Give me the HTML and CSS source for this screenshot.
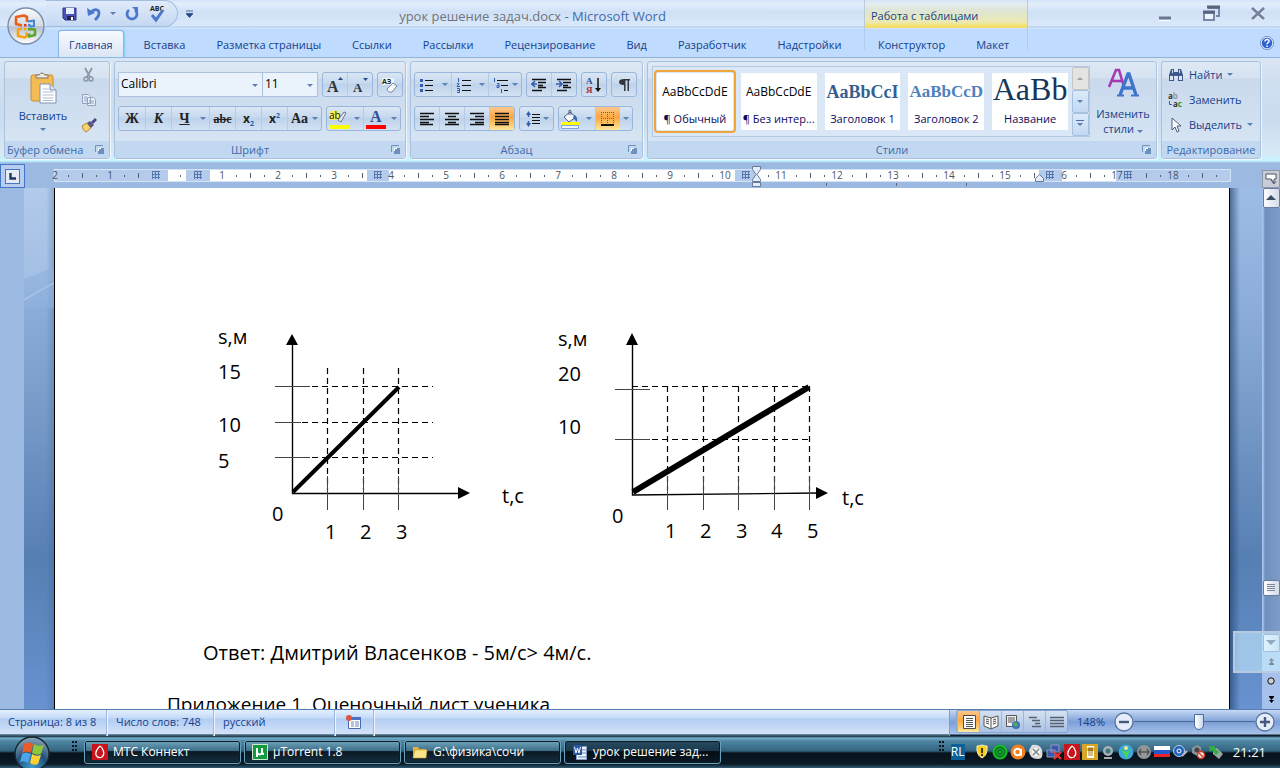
FILE: index.html
```html
<!DOCTYPE html>
<html lang="ru">
<head>
<meta charset="utf-8">
<title>урок решение задач.docx - Microsoft Word</title>
<link rel="stylesheet" href="styles.css">
</head>
<body>
<header class="header">
  <button class="office" aria-label="Кнопка Office">
    <svg width="40" height="40" viewBox="0 0 40 40">
      <defs>
        <linearGradient id="orb" x1="0" y1="0" x2="0" y2="1"><stop offset="0" stop-color="#fafcfe"/><stop offset=".5" stop-color="#d3d8e2"/><stop offset=".52" stop-color="#b7bfcf"/><stop offset="1" stop-color="#fff"/></linearGradient>
      </defs>
      <circle cx="20" cy="20" r="18" fill="url(#orb)" stroke="#7c8da8" stroke-width="1.4"/>
      <g fill="none" stroke-width="2.6" stroke-linejoin="round">
        <path d="M16 19.500l-6-1.500v-7l8-1.500 3 1.500v5" stroke="#e8601c"/>
        <path d="M22 15.500l6-1v5.500l-4 .5" stroke="#3d86d8" stroke-width="2"/>
        <path d="M16 22.500l-4 1v6.500l7 1.500 1.500-1v-4" stroke="#f5a512"/>
        <path d="M23 23l6 .5v5.500l-6 1.500v-3" stroke="#5aa52c"/>
      </g>
      <path d="M18 18h2.500v2.500H18z" fill="#e03a1a"/><path d="M22 18h2.500v2.500H22z" fill="#3d86d8"/><path d="M18 22h2.500v2.500H18z" fill="#f5a512"/><path d="M22 22h2.500v2.500H22z" fill="#5aa52c"/>
    </svg>
  </button>
  <div class="titlebar">
    <div class="qat">
      <button aria-label="Сохранить"><svg width="16" height="16"><path d="M1 2h13v12H3l-2-2z" fill="#4a50b4" stroke="#30348c"/><path d="M4 2h8v6H4z" fill="#e6effc"/><path d="M5 10h7v4H5z" fill="#20264e"/><path d="M9 11h2v3H9z" fill="#fff"/></svg></button>
      <button aria-label="Отменить"><svg width="16" height="16"><path d="M5 6c4-4 8-2 8 1 0 3-1 4-4 7" fill="none" stroke="#4a78cc" stroke-width="2.800"/><path d="M1 2l1 8 7-3z" fill="#4a78cc"/></svg></button>
      <i class="arrow"></i>
      <button aria-label="Повторить"><svg width="16" height="16"><path d="M5 4a5 5 0 1 0 6 0" fill="none" stroke="#4a78cc" stroke-width="2.800"/><path d="M8 1h6v6z" fill="#4a78cc"/></svg></button>
      <button aria-label="Правописание"><svg width="20" height="18"><text x="2" y="6" class="tiny">ABC</text><path d="M4 10l4 5 7-10" fill="none" stroke="#4a78cc" stroke-width="3"/></svg></button>
    </div>
    <button class="customize" aria-label="Настройка панели быстрого доступа"><svg width="7" height="8"><path d="M0 1h7M0 3.500h7l-3.500 4z" fill="#274a86" stroke="#274a86" stroke-width=".8"/></svg></button>
    <h1 class="title"><span>урок решение задач.docx</span> - Microsoft Word</h1>
  </div>
  <div class="context-title">Работа с таблицами</div>
  <div class="window-buttons">
    <button aria-label="Свернуть"><svg width="14" height="14"><path d="M1 11h12" stroke="#6a7890" stroke-width="3"/><path d="M1 13.500h12" stroke="#fff"/></svg></button>
    <button aria-label="Восстановить"><svg width="18" height="18"><path d="M6 3h11v8h-3" fill="none" stroke="#7788a6" stroke-width="2"/><path d="M5 2h13" stroke="#56647e" stroke-width="3"/><path d="M2 8h10v7H2z" fill="#edf4fd" stroke="#7788a6" stroke-width="2"/><path d="M1 7h12" stroke="#56647e" stroke-width="3"/></svg></button>
    <button aria-label="Закрыть"><svg width="16" height="14"><path d="M2 1l12 11M14 1L2 12" stroke="#fff" stroke-width="4"/><path d="M2 1l12 11M14 1L2 12" stroke="#74839f" stroke-width="3"/></svg></button>
  </div>
  <nav class="tabs">
    <a href="#" class="active">Главная</a><a href="#">Вставка</a><a href="#">Разметка страницы</a><a href="#">Ссылки</a><a href="#">Рассылки</a><a href="#">Рецензирование</a><a href="#">Вид</a><a href="#">Разработчик</a><a href="#">Надстройки</a>
  </nav>
  <nav class="tabs context"><a href="#">Конструктор</a><a href="#">Макет</a></nav>
  <div class="help">
    <button aria-label="Справка"><svg width="14" height="14"><circle cx="7" cy="7" r="6" fill="#2f62d0" stroke="#dce9fb" stroke-width="1.500"/><circle cx="7" cy="7" r="6.600" fill="none" stroke="#5677b0" stroke-width=".7"/><path d="M5 5.500c0-3 4.500-2.500 4 0-.3 1-2 1.200-2 2.800M7 9.500v1.500" fill="none" stroke="#fff" stroke-width="1.500"/></svg></button>
  </div>
</header>

<main class="ribbon">
  <section class="group clipboard">
    <div class="body">
      <button class="paste"><svg width="30" height="32"><rect x="3" y="3" width="22" height="26" rx="2" fill="#f4bd53" stroke="#c58d33"/><path d="M8 6V3h3q3-4 6 0h3v3z" fill="#ece6dc" stroke="#7c7468"/><path d="M12 12h10l6 6v13H12z" fill="#fff" stroke="#7d90b4"/><path d="M22 12v6h6" fill="#d6e2f4" stroke="#7d90b4"/><path d="M14.500 17h6M14.500 20h11M14.500 23h11M14.500 26h11M14.500 28.500h11" stroke="#b0bdd4"/></svg><span>Вставить</span><i class="arrow"></i></button>
      <div class="small-tools">
        <button aria-label="Вырезать"><svg width="16" height="16"><path d="M4 1l5 9M11 1L6 10" stroke="#8c97aa" stroke-width="1.800"/><circle cx="5" cy="12" r="2" fill="none" stroke="#8c97aa" stroke-width="1.500"/><circle cx="10" cy="12" r="2" fill="none" stroke="#8c97aa" stroke-width="1.500"/></svg></button>
        <button aria-label="Копировать"><svg width="16" height="16"><path d="M1.500 2.500h6l2 2v7h-8zM6.500 5.500h6l2 2v6h-8z" fill="#e9eff8" stroke="#92a2be"/><path d="M3 5h3M3 7h3M3 9h3M8 9h5M8 11h5" stroke="#92a2be"/></svg></button>
        <button aria-label="Формат по образцу"><svg width="16" height="16"><path d="M1 9l5-3 4 5-5 4q-3-1-4-6z" fill="#f6d36c" stroke="#b88a38"/><path d="M6 6l3-2 4 4-3 3z" fill="#5d5684"/><path d="M10 5l4-4 2 2-4 4z" fill="#49468c"/></svg></button>
      </div>
    </div>
    <h2>Буфер обмена <button class="launch" aria-label="Буфер обмена: параметры"><svg width="9" height="9"><use href="#launch"/></svg></button></h2>
  </section>

  <section class="group font">
    <div class="body rows">
      <div class="row">
        <div class="combos">
          <label class="combo family"><select aria-label="Шрифт"><option>Calibri</option></select></label>
          <label class="combo size"><select aria-label="Размер"><option>11</option></select></label>
        </div>
        <div class="btns"><button aria-label="Увеличить"><svg width="18" height="18"><text x="1" y="16" class="serif big">A</text><path d="M12 4l2.500-3L17 4z" fill="#274a86"/></svg></button><button aria-label="Уменьшить"><svg width="18" height="18"><text x="2" y="16" class="serif">A</text><path d="M12 2h5l-2.500 3z" fill="#274a86"/></svg></button></div>
        <div class="btns"><button aria-label="Очистить формат"><svg width="20" height="18"><path d="M2 2h12v7H2z" fill="#eef3fa"/><text x="2" y="8" class="tiny">AЗ</text><path d="M7 13l6-6 4 3-5 6q-4 1-5-3z" fill="#f4f7fc" stroke="#7484a2"/></svg></button></div>
      </div>
      <div class="row">
        <div class="btns format">
          <button class="glyph"><b>Ж</b></button><button class="glyph"><b><em>К</em></b></button><button class="glyph"><b><u>Ч</u></b></button><button class="drop" aria-label="Подчеркивание"><i class="arrow"></i></button><button class="glyph small"><s>abc</s></button><button class="glyph script"><b>x<sub>2</sub></b></button><button class="glyph script"><b>x<sup>2</sup></b></button><button class="glyph case"><b>Aa</b><i class="arrow"></i></button>
        </div>
        <div class="btns">
          <button aria-label="Выделение"><svg width="20" height="20"><path d="M0 2h11v9H0z" fill="#f5ee5a"/><text x="0" y="10" class="ab">ab</text><path d="M9 11l6-8 2 1-5 9z" fill="#e5ebf5" stroke="#66748e"/><path d="M0 16h20v4H0z" fill="#ff0"/></svg></button><button class="drop" aria-label="Цвет выделения"><i class="arrow"></i></button><button aria-label="Цвет текста"><svg width="20" height="20"><text x="4" y="13" class="serif colour">A</text><path d="M0 16h20v4H0z" fill="#f00"/></svg></button><button class="drop" aria-label="Выбор цвета"><i class="arrow"></i></button>
        </div>
      </div>
    </div>
    <h2>Шрифт <button class="launch" aria-label="Шрифт: параметры"><svg width="9" height="9"><use href="#launch"/></svg></button></h2>
  </section>

  <section class="group paragraph">
    <div class="body rows">
      <div class="row">
        <div class="btns">
          <button aria-label="Маркеры"><svg width="16" height="16"><path d="M6 3.500h8M6 8.500h8M6 13.500h8" stroke="#111"/><path d="M1 2h3v3H1zM1 7h3v3H1zM1 12h3v3H1z" fill="#355cae"/></svg></button><button class="drop" aria-label="Вид маркеров"><i class="arrow"></i></button><button aria-label="Нумерация"><svg width="16" height="16"><path d="M6 3.500h9M6 8.500h9M6 13.500h9" stroke="#111"/><path d="M2.500 1v4M1 6.500h2L1 9.500h3M1 11.500h2.500v4H1M1 13.500h2" fill="none" stroke="#355cae"/></svg></button><button class="drop" aria-label="Вид нумерации"><i class="arrow"></i></button><button class="wide" aria-label="Многоуровневый список"><svg width="18" height="16"><path d="M5 3.500h11M9 8.500h7M12 13.500h4" stroke="#111"/><path d="M2.500 1v4M5 6.500h2v4H5V8.500h2M9.500 12v4" fill="none" stroke="#355cae"/></svg><i class="arrow"></i></button>
        </div>
        <div class="btns"><button aria-label="Уменьшить отступ"><svg width="16" height="16"><path d="M1 2.500h14M7 5.500h8M7 8.500h5M7 10.500h8M1 13.500h10" stroke="#111" stroke-width="1.500"/><path d="M6 7H1M4 4L1 7l3 3" fill="none" stroke="#355cae" stroke-width="1.600"/></svg></button><button aria-label="Увеличить отступ"><svg width="16" height="16"><path d="M1 2.500h14M7 5.500h8M7 8.500h5M7 10.500h8M1 13.500h10" stroke="#111" stroke-width="1.500"/><path d="M0 7h5M3 4l3 3-3 3" fill="none" stroke="#355cae" stroke-width="1.600"/></svg></button></div>
        <div class="btns"><button aria-label="Сортировка"><svg width="18" height="18"><text x="1" y="8" class="sort">А</text><text x="1" y="17" class="sort red">Я</text><path d="M13 2v13" stroke="#111" stroke-width="1.500"/><path d="M10 12h6l-3 4z" fill="#111"/></svg></button></div>
        <div class="btns"><button aria-label="Отобразить все знаки"><svg width="14" height="16"><path d="M7 2h6v1.500h-1V14h-1.500V3.500H8.500V14H7V8Q2 8 2 5t5-3z" fill="#33383f"/></svg></button></div>
      </div>
      <div class="row">
        <div class="btns">
          <button aria-label="По левому краю"><svg width="16" height="14"><path d="M1 1.500h14M1 4.500h9M1 7.500h14M1 10.500h9M1 12.500h13" stroke="#111" stroke-width="1.400"/></svg></button><button aria-label="По центру"><svg width="16" height="14"><path d="M1 1.500h14M4 4.500h8M1 7.500h14M4 10.500h8M1 12.500h14" stroke="#111" stroke-width="1.400"/></svg></button><button aria-label="По правому краю"><svg width="16" height="14"><path d="M1 1.500h14M6 4.500h9M1 7.500h14M6 10.500h9M1 12.500h14" stroke="#111" stroke-width="1.400"/></svg></button><button class="on" aria-label="По ширине"><svg width="16" height="14"><path d="M1 1.500h14M1 4.500h14M1 7.500h14M1 10.500h14M1 12.500h14" stroke="#111" stroke-width="1.400"/></svg></button>
        </div>
        <div class="btns"><button class="wide" aria-label="Междустрочный интервал"><svg width="16" height="16"><path d="M7 3.500h8M7 6.500h8M7 9.500h8M7 12.500h8" stroke="#111"/><path d="M3.500 2v4M3.500 10v4" stroke="#355cae" stroke-width="1.500"/><path d="M1 4l2.500-4L6 4zM1 12l2.500 4L6 12z" fill="#355cae"/></svg><i class="arrow"></i></button></div>
        <div class="btns">
          <button aria-label="Заливка"><svg width="20" height="20"><path d="M3 8l6-5 6 5-7 5z" fill="#f5f8fd" stroke="#4f5f7c"/><path d="M8 6V1.500q2-1 2 1V6" fill="none" stroke="#4f5f7c"/><path d="M13 6q4 1 3 7-2-2-4-4z" fill="#3e68b6"/><path d="M0 13h18v3H0z" fill="#ff0"/><path d="M.5 16.500h17v3H.5z" fill="#eef5ff" stroke="#7aa6dc"/></svg></button><button class="drop" aria-label="Цвет заливки"><i class="arrow"></i></button><button class="on" aria-label="Границы"><svg width="16" height="16"><path d="M1.500 1v12M7.500 1v12M13.500 1v12M1 1.500h13M1 7.500h13" stroke="#735f48" stroke-dasharray="1 1"/><path d="M1 14h13" stroke="#111" stroke-width="2"/></svg></button><button class="drop" aria-label="Вид границ"><i class="arrow"></i></button>
        </div>
      </div>
    </div>
    <h2>Абзац <button class="launch" aria-label="Абзац: параметры"><svg width="9" height="9"><use href="#launch"/></svg></button></h2>
  </section>

  <section class="group styles">
    <div class="body">
      <div class="gallery">
        <button class="style picked"><span class="sample">AaBbCcDdE</span><span>¶ Обычный</span></button>
        <button class="style"><span class="sample">AaBbCcDdE</span><span>¶ Без интер...</span></button>
        <button class="style"><span class="sample h1">AaBbCcI</span><span>Заголовок 1</span></button>
        <button class="style"><span class="sample h2">AaBbCcD</span><span>Заголовок 2</span></button>
        <button class="style"><span class="sample name">AaBb</span><span>Название</span></button>
        <div class="scroller"><button class="off" aria-label="Вверх"><i class="arrow up"></i></button><button aria-label="Вниз"><i class="arrow"></i></button><button aria-label="Еще"><i class="arrow more"></i></button></div>
      </div>
      <button class="change"><svg width="32" height="32"><path d="M2 21L9 4h3l5 17M4 15h11" fill="none" stroke="#a33ab0" stroke-width="2.600"/><path d="M13 29l8-21h1l7 21M16 22h10" fill="none" stroke="#3f74cc" stroke-width="3.400"/><path d="M10 29.500h7M24 29.500h8" stroke="#3f74cc" stroke-width="2"/></svg><span>Изменить<br>стили <i class="arrow"></i></span></button>
    </div>
    <h2>Стили <button class="launch" aria-label="Стили: параметры"><svg width="9" height="9"><use href="#launch"/></svg></button></h2>
  </section>

  <section class="group editing">
    <div class="body">
      <button><svg width="16" height="16"><path d="M3 2h3v3h4V2h3l2 6v6h-5V9H6v5H1V8z" fill="#3d598a"/><path d="M2 9h3v4H2zM11 9h3v4h-3zM4 3h1v3H4zM11 3h1v3h-1z" fill="#dbe7f8"/></svg>Найти <i class="arrow"></i></button>
      <button><svg width="16" height="16"><text x="0" y="7" class="repl">a<tspan fill="#999">b</tspan></text><text x="5" y="15" class="repl">a<tspan fill="#159a2c">c</tspan></text><path d="M1.500 9v3.500H4" fill="none" stroke="#355cae"/></svg>Заменить</button>
      <button><svg width="16" height="16"><path d="M4 1v12l3-3 2 5 2-1-2-5h4z" fill="#fff" stroke="#4c5c78"/></svg>Выделить <i class="arrow"></i></button>
    </div>
    <h2>Редактирование</h2>
  </section>
</main>

<div class="rulerbar">
  <button class="tabstop" aria-label="Позиция табуляции"><span><svg width="8" height="8"><path d="M1.500 1v5.500H7" fill="none" stroke="#22365c" stroke-width="2.400"/></svg></span></button>
  <svg class="ruler" height="24">
    <defs>
      <pattern id="ticks" x="54" y="169" width="56" height="13" patternUnits="userSpaceOnUse"><path d="M14 6h1v2h-1zM28 4h1v5h-1zM42 6h1v2h-1z" fill="#55606e"/></pattern>
      <path id="cell" d="M0 .5h8M0 3.500h8M0 6.500h8M.5 0v8M3.500 0v8M6.500 0v8" stroke="#5577ad" fill="none"/>
      <g id="launch"><path d="M.5 7V.5H8" fill="none" stroke="#7391bd"/><path d="M3 3h6v6H3z" fill="#6f8fbd"/><path d="M3 3h3v1H4v2H3z" fill="#fff"/></g>
    </defs>
    <g transform="translate(-25 -164)">
      <path d="M54 169h1177v13H54z" fill="#b4cbeb"/>
      <path d="M168 169h18v13h-18zM210 169h157v13H210zM389 169h346v13H389zM757 169h282v13H757zM1062 169h54v13h-54z" fill="#fff"/>
      <path d="M54 169.500h1176.500v12H54.500z" fill="none" stroke="#d5e3f6"/>
      <path d="M60 169h88v13H60zM168 169h18v13h-18zM226 169h141v13H226zM395 169h340v13H395zM762 169h276v13H762zM1068 169h42v13h-42zM1134 169h90v13h-90z" fill="url(#ticks)"/>
      <g class="num"><text x="55" y="179">2</text><text x="110" y="179">1</text><text x="222" y="179">1</text><text x="278" y="179">2</text><text x="334" y="179">3</text><text x="391" y="179">4</text><text x="446" y="179">5</text><text x="502" y="179">6</text><text x="558" y="179">7</text><text x="614" y="179">8</text><text x="670" y="179">9</text><text x="725" y="179">10</text><text x="781" y="179">11</text><text x="837" y="179">12</text><text x="893" y="179">13</text><text x="949" y="179">14</text><text x="1005" y="179">15</text><text x="1064" y="179">6</text><text x="1117" y="179">17</text><text x="1173" y="179">18</text></g>
      <use href="#cell" x="152" y="171"/><use href="#cell" x="194" y="171"/><use href="#cell" x="374" y="171"/><use href="#cell" x="742" y="171"/><use href="#cell" x="1046" y="171"/><use href="#cell" x="1124" y="171"/>
      <path d="M752.500 166.500h8v3l-3.500 5 3.500 5v2h-8v-2l3.500-5-3.500-5zM752.500 182.500h8v4h-8zM1035.500 181.500v-3l4-4 4 4v3z" fill="#e4ecf6" stroke="#667a9c"/>
      <path d="M826 183h1v3h-1zM896 183h1v3h-1zM966 183h1v3h-1z" fill="#667"/>
    </g>
  </svg>
  <button class="toggle" aria-label="Линейка"><svg width="12" height="12"><path d="M1 1h10v5h-2v4l-3-4H1zM6 7l3 4 2-3" fill="#fff" stroke="#4b5567"/></svg></button>
</div>

<div class="workspace">
  <div class="vruler"></div>
  <div class="backdrop"><svg width="30" height="120"><path d="M0 91Q14 86 30 79v41H0z" fill="#8fb0dc" opacity=".6"/><path d="M0 112Q14 103 30 95" fill="none" stroke="#a9c3e6" stroke-width="1.500"/></svg></div>
  <article class="paper">
    <div class="charts">
      <svg width="340" height="240" viewBox="203 320 340 240" role="img" aria-label="График s(t) для 5 м/с">
        <path d="M292.500 344v149.500H460" class="axis"/><path d="M292 334l6 11h-12zM470 493l-12-6v12z"/>
        <path d="M327.500 368v122M363.500 368v122M398.500 368v122M292 386.500h141M292 422.500h141M292 457.500h141" class="dash"/>
        <path d="M275 386.500h35M275 422.500h26M275 457.500h35M327.500 476v34M363.500 476v34M398.500 476v34" class="tick"/>
        <path d="M293 492L399 387" class="plot"/>
        <g class="label"><text x="218" y="344">s,м</text><text x="218" y="379">15</text><text x="218" y="432">10</text><text x="218" y="468">5</text><text x="272" y="521">0</text><text x="325" y="539">1</text><text x="360" y="539">2</text><text x="396" y="539">3</text><text x="502" y="503">t,с</text></g>
      </svg>
      <svg width="340" height="240" viewBox="543 320 340 240" role="img" aria-label="График s(t) для 4 м/с">
        <path d="M632.500 344v151L818 493" class="axis"/><path d="M632 333l6 12h-12zM828 493l-12-6v12z"/>
        <path d="M667.500 386v104M703.500 386v104M738.500 386v104M774.500 386v104M809.500 386v104M632 386.500h178M632 439.500h178" class="dash"/>
        <path d="M615 389.500h35M615 439.500h35M667.500 476v34M703.500 476v34M738.500 476v34M774.500 476v34M809.500 476v34" class="tick"/>
        <path d="M633 492L809 387" class="plot bold"/>
        <g class="label"><text x="558" y="346">s,м</text><text x="558" y="381">20</text><text x="558" y="434">10</text><text x="612" y="523">0</text><text x="665" y="538">1</text><text x="700" y="538">2</text><text x="736" y="538">3</text><text x="771" y="538">4</text><text x="807" y="538">5</text><text x="842" y="505">t,с</text></g>
      </svg>
    </div>
    <p class="answer">Ответ: Дмитрий Власенков - 5м/с&gt; 4м/с.</p>
    <p class="appendix">Приложение 1. Оценочный лист ученика</p>
  </article>
  <div class="gutter"></div>
  <div class="scrollbar">
    <button class="sb" aria-label="Прокрутить вверх"><svg width="10" height="6"><path d="M0 5l5-5 5 5z" fill="#3e4b66"/></svg></button>
    <div class="track"><button class="sb thumb" aria-label="Ползунок"><svg width="8" height="8"><path d="M0 .5h8M0 2.500h8M0 4.500h8M0 6.500h8" stroke="#7b8494"/></svg></button></div>
    <button class="sb" aria-label="Прокрутить вниз"><svg width="10" height="6"><path d="M0 0l5 5 5-5z" fill="#3e4b66"/></svg></button>
    <button class="nav" aria-label="Предыдущая страница"><svg width="5" height="7"><path d="M0 3l2.500-3L5 3zM0 6l2.500-3L5 6zM0 6h5v1H0z"/></svg></button>
    <button class="nav" aria-label="Объект перехода"><svg width="8" height="8"><circle cx="4" cy="4" r="3.200" fill="#ccc" stroke="#111"/></svg></button>
    <button class="nav" aria-label="Следующая страница"><svg width="5" height="7"><path d="M0 0h5v1H0zM0 1h5L2.500 4zM0 4h5L2.500 7z"/></svg></button>
    <div class="ghost"></div>
  </div>
</div>

<footer class="status">
  <span class="cell page">Страница: 8 из 8</span><span class="cell words">Число слов: 748</span><span class="cell lang">русский</span>
  <span class="cell macro"><svg width="16" height="14"><path d="M2.500 2.500h12v11h-12z" fill="#fff" stroke="#4a6bb0"/><path d="M2 2h13v3H2z" fill="#4a72c0"/><path d="M5 7h3M9 7h4M5 9h3M9 9h4M5 11h3M9 11h4" stroke="#6f86b4"/><circle cx="3" cy="3" r="3" fill="#dc553c"/></svg></span>
  <div class="tools">
    <div class="views">
      <button class="on" aria-label="Разметка страницы"><svg width="16" height="16"><path d="M2.500 1.500h12v13h-12z" fill="#fff" stroke="#4c4c4c"/><path d="M5 4.500h7M5 6.500h7M5 8.500h7M5 10.500h7M5 12.500h7" stroke="#555"/></svg></button><button aria-label="Режим чтения"><svg width="16" height="16"><path d="M1 2l7 2 7-2v10l-7 3-7-3z" fill="#f5f5f5" stroke="#555"/><path d="M8 4v11M3 5l3 1M3 7l3 1M3 9l3 1M13 5l-3 1M13 7l-3 1M13 9l-3 1" stroke="#555"/></svg></button><button aria-label="Веб-документ"><svg width="16" height="16"><path d="M1.500 1.500h10v11h-10z" fill="#eee" stroke="#555"/><path d="M3 4h7M3 6h7M3 8h5" stroke="#555"/><circle cx="11" cy="11" r="4" fill="#3a73b8"/><path d="M8 10q2-3 4-1t-1 4z" fill="#5cab52"/></svg></button><button aria-label="Структура"><svg width="16" height="16"><path d="M2 3.500h8M5 6.500h8M8 9.500h5M5 12.500h9" stroke="#56606e" stroke-width="1.500"/></svg></button><button aria-label="Черновик"><svg width="16" height="16"><path d="M1 3.500h14M1 6.500h14M1 9.500h14M1 12.500h14" stroke="#56606e" stroke-width="1.500"/></svg></button>
    </div>
    <button class="percent">148%</button>
    <button class="zoom" aria-label="Уменьшить"><svg width="20" height="20"><circle cx="10" cy="10" r="9" fill="#e4edf9" stroke="#56729c" stroke-width="1.300"/><path d="M5 10h10" stroke="#45597c" stroke-width="2.400"/></svg></button>
    <input type="range" min="0" max="100" value="54" aria-label="Масштаб">
    <button class="zoom" aria-label="Увеличить"><svg width="20" height="20"><circle cx="10" cy="10" r="9" fill="#e4edf9" stroke="#56729c" stroke-width="1.300"/><path d="M5 10h10M10 5v10" stroke="#45597c" stroke-width="2.400"/></svg></button>
  </div>
</footer>

<footer class="taskbar">
  <button class="start" aria-label="Пуск"><svg width="36" height="32"><defs><radialGradient id="st" cx=".5" cy=".9" r=".9"><stop offset="0" stop-color="#3f9fd0"/><stop offset=".5" stop-color="#22507a"/><stop offset="1" stop-color="#8ea9bb"/></radialGradient></defs><circle cx="18" cy="18" r="17" fill="url(#st)" stroke="#16252f" stroke-width="1.500"/><path d="M10 8q4-3 9 0l-2 9q-5-3-9 0z" fill="#ee5b26"/><path d="M20 8q5 3 10 1l-3 9q-4 2-9-1z" fill="#8cc63c"/><path d="M8 18q4-3 9 0l-3 9q-4-3-8-1z" fill="#4ea4e8"/><path d="M18 18q4 3 9 1l-3 9q-4 2-8-1z" fill="#fbd034"/></svg></button>
  <i class="grip"></i>
  <div class="tasks">
    <button><svg width="16" height="16"><path d="M0 0h16v16H0z" fill="#c8141c"/><path d="M8 2q-5 5-4 9 2 4 6 2 3-3 1-7-1-3-3-4" fill="none" stroke="#fff" stroke-width="1.300"/></svg><span>МТС Коннект</span></button>
    <button><svg width="16" height="16"><path d="M.5.5h15v15H.5z" fill="#129a3e" stroke="#cfe8d4"/><path d="M5 4v9M5 9q3 3 5 0V4M10 8q0 2 2 2" fill="none" stroke="#fff" stroke-width="2"/></svg><span>µTorrent 1.8</span></button>
    <button><svg width="16" height="16"><path d="M1 3h5l1 2h7v8H1z" fill="#e2b33c"/><path d="M3 6h12l-1 8H1z" fill="#fbe58a" stroke="#c89a2c" stroke-width=".6"/></svg><span>G:\физика\сочи</span></button>
    <button class="current"><svg width="16" height="16"><path d="M4.500 2.500h10v13h-10z" fill="#eef3fb" stroke="#7f9bc8"/><path d="M10 6h4M10 9h4M6 13h8" stroke="#6a87ba"/><path d="M1 1h9v10H1z" fill="#2c56a8"/><path d="M2.500 3l1.500 6 1.500-5L7 9l1.500-6" fill="none" stroke="#fff"/></svg><span>урок решение зад...</span></button>
  </div>
  <div class="tray">
    <i class="grip"></i>
    <span class="layout">RL</span>
    <div class="icons">
      <svg width="16" height="16"><path d="M8 1q3 1 5 1 1 9-5 12Q2 11 3 2q2 0 5-1z" fill="#f8d020" stroke="#f7f0c0"/><path d="M8 4v5M8 10v2" stroke="#111" stroke-width="1.600"/></svg>
      <svg width="16" height="16"><circle cx="8" cy="8" r="7.500" fill="#14b828"/><circle cx="8" cy="8" r="4.500" fill="none" stroke="#0a6620" stroke-width="1.300"/><circle cx="8" cy="8" r="2" fill="none" stroke="#0a6620" stroke-width="1.300"/></svg>
      <svg width="16" height="16"><circle cx="8" cy="8" r="7.500" fill="#f08020"/><circle cx="7.500" cy="8" r="3.200" fill="none" stroke="#fff" stroke-width="2"/><path d="M11 5v7" stroke="#fff" stroke-width="2"/></svg>
      <svg width="16" height="16"><path d="M4 1q8-1 10 5 2 9-4 9Q1 15 1 6z" fill="#dcdcdc"/><circle cx="8" cy="8" r="4" fill="#f6f6f6"/><path d="M5 5l6 6M11 5l-6 6" stroke="#888" stroke-width="1.600"/></svg>
      <svg width="16" height="16"><path d="M5 1h8v7H5zM1 6h8v7H1z" fill="#3f57a8" stroke="#8f9cc8"/><path d="M8 8l7 7M15 8l-7 7" stroke="#e33" stroke-width="2.200"/></svg>
      <svg width="16" height="16"><path d="M0 0h16v16H0z" fill="#c8141c"/><path d="M8 2q-5 5-4 9 2 4 6 2 3-3 1-7-1-3-3-4" fill="none" stroke="#fff" stroke-width="1.300"/></svg>
      <svg width="16" height="16"><path d="M0 0h16v16H0z" fill="#d9a526"/><path d="M5 2h7v12H5z" fill="#fff"/><path d="M6 4h5v3H6zM6 9h5M6 11h5" fill="#a97b18" stroke="#a97b18"/></svg>
      <svg width="16" height="16"><circle cx="8" cy="7" r="5" fill="#a9b0b6"/><circle cx="8" cy="7" r="2.500" fill="#347a78"/><path d="M4 14h8" stroke="#aaa" stroke-width="2"/></svg>
      <svg width="16" height="16"><circle cx="8" cy="8" r="7.500" fill="#3da6dc"/><path d="M3 5l5 3 5-3-3 5-1 5-3-5z" fill="#46d848"/><circle cx="8" cy="4" r="2" fill="#e4ee80"/></svg>
      <svg width="16" height="16"><circle cx="8" cy="8" r="7" fill="#939799"/><path d="M3 8h10M5 5L3 8l2 3M11 5l2 3-2 3" fill="none" stroke="#555" stroke-width="1.400"/></svg>
      <svg width="16" height="16"><path d="M0 2h16v4H0z" fill="#fff"/><path d="M0 6h16v4H0z" fill="#2858d0"/><path d="M0 10h16v3H0z" fill="#e22"/></svg>
      <svg width="16" height="16"><circle cx="7" cy="7" r="5.500" fill="#1f61b8" stroke="#b5d3f4"/><circle cx="7" cy="7" r="2" fill="none" stroke="#fff"/><path d="M10 12l5-5" stroke="#bbb" stroke-width="2"/></svg>
      <svg width="16" height="16"><path d="M2 4l5-3 4 2v7l-4 2-5-3z" fill="#8d9399"/><circle cx="7" cy="6" r="2.500" fill="#444"/><circle cx="11" cy="11" r="3.500" fill="#eee" stroke="#d43a2a" stroke-width="1.500"/><path d="M9 9l4 4" stroke="#d43a2a" stroke-width="1.500"/></svg>
      <svg width="16" height="16"><path d="M5 5l4-1 6 6-4 5-6-5z" fill="#9ba4a4"/><path d="M1 2l6 0-1 2 5 4-3 3-4-5-2 2z" fill="#2fb03c"/></svg>
    </div>
    <time>21:21</time>
  </div>
</footer>
</body>
</html>
```
FILE: styles.css
```css
* { box-sizing: border-box; }

body {
  margin: 0;
  height: 100vh;
  overflow: hidden;
  display: flex;
  flex-direction: column;
  font: 11px/16px "Open Sans", "Noto Sans", sans-serif;
  color: #15428b;
  background: #9bb9e1;
}

button {
  font: inherit;
  color: inherit;
  background: none;
  border: 0;
  padding: 0;
  margin: 0;
  display: flex;
  align-items: center;
  justify-content: center;
  white-space: nowrap;
}

svg { flex: none; display: block; }

h1, h2, p { margin: 0; font-weight: normal; }

.arrow {
  flex: none;
  display: inline-block;
  border: 3px solid transparent;
  border-top-color: #5b80b4;
  border-bottom: 0;
}
.arrow.up { border-top: 0; border-bottom: 3px solid #a0a0a0; }
.arrow.more { position: relative; }
.arrow.more::before { content: ""; position: absolute; left: -4px; top: -6px; width: 8px; height: 1px; background: #4b6e9e; }

/* Title bar and tabs */
.header {
  position: relative;
  display: grid;
  grid-template-columns: minmax(0, 864px) 164px 1fr;
  grid-template-rows: 28px 29px;
  background: linear-gradient(#d3e4f9 0, #e3eefc 4px, #cfe0f6 12px, #dbe9fa 26px, #a5c9ec 27px, #dcecff 28px, #bfdbff 29px);
}
.office { position: absolute; left: 6px; top: 6px; z-index: 2; }
.titlebar { display: flex; align-items: center; min-width: 0; }
.qat {
  display: flex;
  align-items: center;
  align-self: flex-start;
  gap: 8px;
  height: 27px;
  width: 132px;
  margin-left: 46px;
  padding-left: 16px;
  border: 1px solid #a3bde0;
  border-left: 0;
  border-radius: 0 14px 14px 0;
  background: linear-gradient(#e0ebfa, #c5d8f2);
}
.customize { margin-left: 8px; }
.title { flex: 1; text-align: center; font-size: 13px; color: #3e6aaa; padding: 3px 0 0 8px; white-space: nowrap; }
.title span { color: #6f757e; }
.context-title {
  padding: 8px 6px 0;
  border: solid #b9c9d8;
  border-width: 0 1px;
  background: linear-gradient(#dce8f400, #ece9b0 80%, #f7df5c 94%, #e8d88a);
}
.window-buttons { display: flex; justify-content: flex-end; align-items: center; gap: 30px; padding-right: 14px; }
.tabs { display: flex; gap: 9px; padding: 2px 0 0 58px; }
.tabs a { padding: 7px 11px 0; color: #15428b; text-decoration: none; white-space: nowrap; }
.tabs a.active {
  border: 1px solid #8db2e3;
  border-bottom: 0;
  border-radius: 4px 4px 0 0;
  padding: 6px 10px 0;
  background: linear-gradient(#f6fafe, #dbe6f4);
  box-shadow: 1px 0 2px #7fd0f0;
}
.tabs.context { padding-left: 2px; border: solid #b0cdee; border-width: 0 1px; height: 22px; }
.help { display: flex; justify-content: flex-end; align-items: center; padding-right: 6px; }

/* Ribbon */
.ribbon {
  display: flex;
  gap: 4px;
  height: 107px;
  padding: 3px 19px 5px 4px;
  border-top: 1px solid #8db2e3;
  background: linear-gradient(#dbe6f4, #d0dff0 20%, #cbdcf0 60%, #d8e8f5 95px, #c4f4ff 103px, #9bb9e1 105px);
}
.group {
  display: flex;
  flex-direction: column;
  flex: none;
  border: 1px solid #a9c3de;
  border-radius: 3px;
  background: linear-gradient(#dfe9f5, #d5e2f0 16px, #c9d9ec 17px, #d9e7f5);
  box-shadow: 1px 1px 0 #f0f6fc;
}
.group .body { flex: 1; display: flex; min-height: 0; }
.group h2 {
  position: relative;
  height: 17px;
  font-size: 11px;
  line-height: 17px;
  text-align: center;
  padding-right: 20px;
  color: #3e6aaa;
  background: #c1d8f0;
  white-space: nowrap;
}
.launch { position: absolute; right: 5px; top: 4px; }
.clipboard { width: 106px; }
.clipboard h2 { text-align: left; padding: 0 0 0 2px; }
.editing h2 { padding: 0; }
.font { width: 292px; }
.paragraph { width: 233px; }
.styles { flex: 1; }
.editing { width: 100px; }

.paste { flex-direction: column; gap: 4px; width: 76px; }
.small-tools { display: flex; flex-direction: column; }
.small-tools button { height: 25px; }

.rows { flex-direction: column; gap: 9px; padding: 10px 0 0 3px; }
.row { display: flex; gap: 4px; }
.btns { display: flex; height: 25px; border: 1px solid #9ab6da; border-radius: 3px; background: linear-gradient(#d9e6f5, #c7d9ee 45%, #bcd1ea 48%, #d3e2f4); }
.btns button { width: 25px; border-left: 1px solid #b4cae6; }
.btns button:first-child { border-left: 0; width: 24px; }
.btns .drop { width: 12px; border-left: 0; }
.btns .wide, .btns .wide:first-child { width: 33px; gap: 2px; }
.btns .on, .views .on { background: linear-gradient(#fbc88c, #fba742 45%, #fcd57c 85%, #ffe9a0); }
.glyph { font-family: "Liberation Serif", serif; font-size: 14px; color: #222; }
.btns .glyph, .btns .glyph:first-child { width: 26px; }
.glyph.small { font-size: 12px; font-weight: bold; }
.glyph.script { font-family: "Open Sans", sans-serif; font-size: 12px; }
.glyph sub, .glyph sup { font-size: 7px; line-height: 0; color: #2a5db4; }
.btns .case { width: 34px; gap: 4px; }
.combos { display: flex; }
.combo { position: relative; display: flex; height: 25px; border: 1px solid #abc1de; background: #eaf2fb; }
.combo + .combo { border-left: 0; }
.combo::after { content: ""; position: absolute; right: 4px; top: 11px; border: 3px solid transparent; border-top-color: #5b80b4; border-bottom: 0; }
.combo select { appearance: none; width: 100%; border: 0; padding: 0 2px 2px; background: none; font: 12px "Open Sans", sans-serif; color: #000; }
.family { width: 145px; }
.size { width: 55px; }

.serif { font: bold 13px "Liberation Serif", serif; fill: #333; }
.serif.big { font-size: 16px; }
.serif.colour { font-size: 16px; fill: #2f4f96; }
.tiny { font: bold 7px "Open Sans", sans-serif; fill: #222; }
.ab { font: 10px "Open Sans", sans-serif; fill: #111; }
.sort { font: bold 9px "Liberation Serif", serif; fill: #274a86; }
.sort.red { fill: #a03038; }
.repl { font: bold 8px "Open Sans", sans-serif; fill: #333; }

.styles .body { padding: 4px 0 4px 4px; }
.gallery { display: flex; flex: 1; max-width: 439px; border: 1px solid #b2c9e4; background: #d9e7f6; }
.style {
  flex: 1;
  flex-direction: column;
  justify-content: flex-start;
  margin: 6px 4px;
  overflow: hidden;
  background: #fff;
  color: #0b0b5c;
}
.style.picked { outline: 2px solid #f0a53a; outline-offset: 1px; border-radius: 1px; }
.style span { line-height: 16px; }
.style .sample { height: 38px; line-height: 38px; font-size: 12px; color: #000; }
.style .h1, .style .h2 { font: bold 18px/38px "Liberation Serif", serif; color: #365f91; }
.style .h2 { font-size: 17px; color: #4f81bd; }
.style .name { font: 32px/32px "Liberation Serif", serif; color: #17365d; }
.scroller { display: flex; flex-direction: column; width: 17px; }
.scroller button { flex: 1; border: 1px solid #a6c0e0; border-radius: 2px; background: linear-gradient(#dceafa, #c3d8f2); }
.scroller .off { background: #e4e4e2; border-color: #c6c6c6; }
.change { flex-direction: column; justify-content: flex-start; width: 66px; gap: 8px; }
.change span { line-height: 15px; }

.editing .body { flex-direction: column; padding: 0 0 0 6px; }
.editing .body button { height: 25px; gap: 5px; justify-content: flex-start; }

/* Ruler */
.rulerbar { display: flex; height: 24px; background: #9bb9e1; }
.tabstop { width: 25px; border: 1px solid #4673cc; background: #b6cdee; }
.tabstop span { display: flex; align-items: center; justify-content: center; width: 15px; height: 15px; border: 1px solid #4673cc; background: #e4ecf8; }
.ruler { flex: 1; min-width: 0; }
.num text { font: 10px "Open Sans", sans-serif; fill: #4a5566; text-anchor: middle; }
.toggle { width: 18px; margin-top: 6px; border: 1px solid #8e98a8; background: #c8ccd4; }

/* Document */
.workspace { display: flex; flex: 1; min-height: 0; }
.vruler { width: 24px; background: #9bb9e1; }
.backdrop { width: 30px; background: linear-gradient(90deg, #3f618f00 22px, #3f618f50), linear-gradient(#b2cbeb, #a3bfe4 88px, #8cadd8 120px, #7699c7 230px, #567fb3 372px, #6892d0); }
.paper { flex: 1; min-width: 0; overflow: hidden; border: solid #000; border-width: 0 1px; background: #fff; color: #000; font-size: 19px; line-height: 26px; }
.charts { display: flex; padding: 132px 0 0 148px; }
.axis { fill: none; stroke: #000; stroke-width: 1.4; }
.dash { fill: none; stroke: #000; stroke-width: 1.2; stroke-dasharray: 6 4; }
.tick { fill: none; stroke: #444; }
.plot { fill: none; stroke: #000; stroke-width: 4; }
.plot.bold { stroke-width: 6; }
.label text { font: 20px "Open Sans", sans-serif; }
.answer { padding: 80px 0 0 148px; font-size: 20px; }
.appendix { padding: 25px 0 0 112px; }
.gutter { width: 32px; background: linear-gradient(90deg, #1f3f6ca0, #2f518000 10px), linear-gradient(#9dbde6, #8cadd8 120px, #7699c7 230px, #567fb3 372px, #6892d0); }
.scrollbar { position: relative; display: flex; flex-direction: column; align-items: center; width: 18px; background: #a6c2ec; }
.sb { width: 17px; height: 18px; flex: none; border: 1px solid #697da3; border-radius: 2px; background: linear-gradient(90deg, #fbfcfe, #d3dcea); }
.scrollbar > .sb:first-child { height: 20px; }
.track { flex: 1; width: 18px; display: flex; flex-direction: column; justify-content: flex-end; align-items: center; padding-bottom: 38px; background: linear-gradient(90deg, #a6c2ec 1px, #6f8fbc 3px, #7e9cc6); }
.thumb { height: 16px; }
.nav { height: 19px; }
.ghost { position: absolute; right: 0; bottom: 36px; width: 47px; height: 42px; border: 2px solid #b9c9e0; border-right: 0; background: #c8ecff99; }

/* Status bar */
.status { display: flex; height: 27px; border-top: 1px solid #567db1; background: linear-gradient(#e3eefd, #c5dbf8 8px, #b2cdf3 9px, #d3e2f8 24px, #102030 25px, #5c9ab4); }
.cell { display: flex; align-items: center; padding-bottom: 3px; border-right: 1px solid #9cb8de; box-shadow: 1px 0 0 #eef5ff; }
.page { width: 107px; padding-left: 8px; }
.words { width: 107px; padding-left: 9px; }
.lang { width: 121px; padding-left: 9px; }
.macro { width: 39px; justify-content: center; }
.tools { display: flex; align-items: center; margin-left: auto; padding: 0 5px 3px 6px; border-left: 1px solid #7f9dc9; background: linear-gradient(#c6d8f3, #88a9dc 10px, #7c9fd6 12px, #a9c3ea 24px, #102030 25px); }
.views { display: flex; border: 1px solid #8aa7d2; border-radius: 2px; background: linear-gradient(#d5e1f2, #a9c1e4); }
.views button { width: 22px; height: 21px; border-left: 1px solid #9fb6d8; }
.percent { width: 46px; }
.tools input { appearance: none; width: 121px; height: 20px; margin: 0; background: linear-gradient(#4e6896, #4e6896) center / 100% 1px no-repeat; }
.tools input::-webkit-slider-thumb { appearance: none; width: 10px; height: 16px; border: 1px solid #4e6896; border-radius: 1px 1px 5px 5px; background: linear-gradient(90deg, #fff, #c8d8ee); }

/* Taskbar */
.taskbar { display: flex; align-items: center; height: 32px; padding: 0 14px; color: #fff; background: linear-gradient(#0e2230, #75afcb 2px, #4f87a3 5px, #326480 15px, #07121b 17px, #0b1a26 28px, #315b72); }
.start { align-self: flex-start; }
.grip { width: 5px; height: 22px; background: radial-gradient(circle at 1px 1px, #0a151d 1px, transparent 1px) 0 0 / 3px 4px; }
.taskbar > .grip { margin: 0 7px 0 22px; }
.tasks { display: flex; flex: 1; gap: 3px; height: 24px; }
.tasks button { flex: 0 1 157px; justify-content: flex-start; gap: 5px; padding: 0 7px; border: 1px solid #6ba0ba; border-radius: 3px; background: linear-gradient(#6fa5be, #3c6d87 45%, #0b1823 48%, #14303f); box-shadow: inset 0 0 0 1px #0c1b26; }
.tasks .current { background: linear-gradient(#254a60, #1c3a4d 45%, #060d14 48%, #0b1a26); }
.tasks span { line-height: 18px; font-size: 12px; }
.tray { display: flex; align-items: center; }
.layout { width: 14px; margin: 0 9px 0 7px; overflow: hidden; background: #0d5f98; font-size: 12px; }
.icons { display: flex; gap: 2px; margin-right: 9px; }
.tray time { font-size: 13px; }
```
